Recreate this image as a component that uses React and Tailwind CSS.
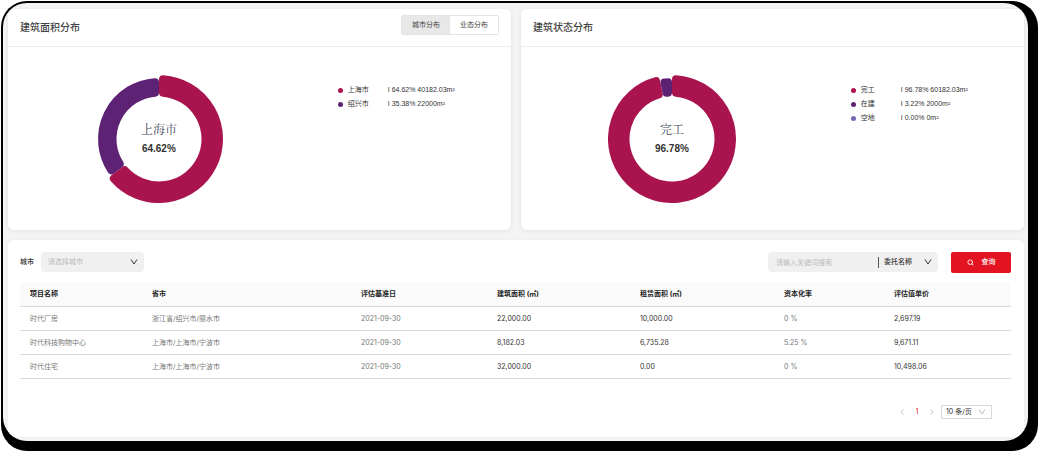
import React, { useState } from 'react';
import { ChevronLeft, ChevronRight, Search } from 'lucide-react';

const areaData = [
  { name: '上海市', percent: 64.62, value: '64.62% 40182.03m²', color: '#a9144f' },
  { name: '绍兴市', percent: 35.38, value: '35.38% 22000m²', color: '#5e2275' },
];

const statusData = [
  { name: '完工', percent: 96.78, value: '96.78% 60182.03m²', color: '#a9144f' },
  { name: '在建', percent: 3.22, value: '3.22% 2000m²', color: '#5e2275' },
  { name: '空地', percent: 0, value: '0.00% 0m²', color: '#7468b4' },
];

const rows = [
  ['时代厂房', '浙江省/绍兴市/丽水市', '2021-09-30', '22,000.00', '10,000.00', '0 %', '2,697.19'],
  ['时代科技购物中心', '上海市/上海市/宁波市', '2021-09-30', '8,182.03', '6,735.28', '5.25 %', '9,671.11'],
  ['时代住宅', '上海市/上海市/宁波市', '2021-09-30', '32,000.00', '0.00', '0 %', '10,498.06'],
];

const columns = [
  { title: '项目名称', width: 'w-[122px]' },
  { title: '省市', width: 'w-[209px]' },
  { title: '评估基准日', width: 'w-[136px]' },
  { title: '建筑面积 (㎡)', width: 'w-[143px]', strong: true },
  { title: '租赁面积 (㎡)', width: 'w-[144px]', strong: true },
  { title: '资本化率', width: 'w-[110px]' },
  { title: '评估值单价', width: 'w-[127px]', strong: true },
];

const CORNER = 4;

// Ring sector with rounded corners: a smaller sector with a round-joined stroke
const sectorPath = (start, end, inner, outer) => {
  const ro = outer - CORNER;
  const ri = inner + CORNER;
  const po = Math.asin(CORNER / ro);
  const pi = Math.asin(CORNER / ri);
  const at = (r, a) => `${r * Math.sin(a)} ${-r * Math.cos(a)}`;
  const large = end - start - 2 * po > Math.PI ? 1 : 0;
  return [
    `M ${at(ro, start + po)}`,
    `A ${ro} ${ro} 0 ${large} 1 ${at(ro, end - po)}`,
    `L ${at(ri, end - pi)}`,
    `A ${ri} ${ri} 0 ${large} 0 ${at(ri, start + pi)}`,
    'Z',
  ].join(' ');
};

const Donut = ({ data }) => {
  let angle = 0;
  const sectors = data
    .filter((item) => item.percent > 0)
    .map((item, index) => {
      const start = angle;
      angle += (item.percent / 100) * Math.PI * 2;
      // the selected sector stands out a little
      return { ...item, d: sectorPath(start, angle, 42.5, index === 0 ? 64 : 61) };
    });

  return (
    <div className="grid h-32 w-32 place-items-center">
      <svg viewBox="-64 -64 128 128" className="col-start-1 row-start-1 h-32 w-32" aria-hidden="true">
        {sectors.map((s) => (
          <path
            key={s.name}
            d={s.d}
            fill={s.color}
            stroke={s.color}
            strokeWidth={CORNER * 2}
            strokeLinejoin="round"
          />
        ))}
      </svg>
      <div className="col-start-1 row-start-1 text-center">
        <p className="font-['Noto_Serif_CJK_SC','Noto_Sans_CJK_SC',serif] text-[12px] leading-5 text-[#464b60]">
          {data[0].name}
        </p>
        <p className="font-['Liberation_Sans',sans-serif] text-[10px] font-bold leading-5 text-[#333]">
          {data[0].percent}%
        </p>
      </div>
    </div>
  );
};

const ChartCard = ({ title, data, children }) => (
  <section className="rounded-md bg-white shadow-[0_1px_4px_rgba(0,0,0,0.08)]">
    <header className="flex h-[38px] items-start justify-between border-b border-[#eee] px-3 pt-1.5">
      <h2 className="text-[10px] font-medium leading-6 text-[#444]">{title}</h2>
      {children}
    </header>
    <div className="flex pb-[27px] pt-7">
      <div className="flex w-3/5 justify-center">
        <Donut data={data} />
      </div>
      <ul className="pl-7 pt-2 font-['Liberation_Sans','Noto_Sans_CJK_SC',sans-serif] text-[7px] leading-[14px] text-[#333]">
        {data.map((item) => (
          <li key={item.name} className="flex items-center whitespace-nowrap">
            <span className="mr-[5px] h-[5px] w-[5px] rounded-full" style={{ background: item.color }} />
            <span className="w-10">{item.name}</span>
            <span>I {item.value}</span>
          </li>
        ))}
      </ul>
    </div>
  </section>
);

const Chevron = ({ className }) => (
  <svg
    viewBox="0 0 8 8"
    className={`pointer-events-none absolute h-2 w-2 ${className}`}
    fill="none"
    stroke="currentColor"
    aria-hidden="true"
  >
    <path d="M1 1.5 4 6 7 1.5" />
  </svg>
);

const App = () => {
  const [tab, setTab] = useState('城市分布');

  return (
    <div className="bg-white p-px font-['Inter','Noto_Sans_CJK_SC',sans-serif]">
      <div className="rounded-[26px] bg-black pb-[10px] pl-[2px] pr-[10px] pt-[2px]">
        <main className="overflow-hidden rounded-[24px] bg-[#f4f4f4] pb-1 pl-[5px] pr-1 pt-1.5">
          <div className="grid grid-cols-2 gap-[10px]">
            <ChartCard title="建筑面积分布" data={areaData}>
              <div className="flex h-5 overflow-hidden rounded-[2px] border border-[#e4e4e4] text-[7px] text-[#444]">
                {['城市分布', '业态分布'].map((name) => (
                  <button
                    key={name}
                    type="button"
                    onClick={() => setTab(name)}
                    className={`w-12 ${tab === name ? 'bg-[#e8e8e8]' : 'bg-white'}`}
                  >
                    {name}
                  </button>
                ))}
              </div>
            </ChartCard>
            <ChartCard title="建筑状态分布" data={statusData} />
          </div>

          <section className="mt-[10px] rounded-md bg-white pb-[18px] pt-3 shadow-[0_0_4px_rgba(0,0,0,0.04)]">
            <form
              className="flex h-5 items-center pl-3 pr-[13px] text-[7px] text-[#333]"
              onSubmit={(e) => e.preventDefault()}
            >
              <label htmlFor="city" className="mr-[7px] font-medium">
                城市
              </label>
              <div className="relative h-5">
                <select
                  id="city"
                  defaultValue=""
                  className="h-5 w-[103px] appearance-none rounded bg-[#f0f0f0] px-[7px] text-[#bbb]"
                >
                  <option value="">请选择城市</option>
                  <option>上海市</option>
                  <option>绍兴市</option>
                </select>
                <Chevron className="right-1.5 top-1.5" />
              </div>

              <div className="ml-auto flex h-5 w-[170px] items-center rounded bg-[#f0f0f0]">
                <input
                  type="text"
                  aria-label="关键词"
                  placeholder="请输入关键词搜索"
                  className="h-5 w-[110px] bg-transparent px-2 outline-none placeholder:text-[#bbb]"
                />
                <span className="h-[11px] w-px bg-[#555]" />
                <div className="relative h-5 flex-1">
                  <select
                    aria-label="搜索类型"
                    className="h-5 w-full appearance-none bg-transparent pl-[5px] font-medium"
                  >
                    <option>委托名称</option>
                    <option>项目名称</option>
                  </select>
                  <Chevron className="right-1.5 top-1.5" />
                </div>
              </div>

              <button
                type="submit"
                className="ml-[13px] flex h-[21px] w-[60px] items-center justify-center gap-2 rounded-[2px] bg-[#e31322] font-medium text-white"
              >
                <Search className="h-[7px] w-[7px]" strokeWidth={3} />
                查询
              </button>
            </form>

            <div className="mt-[10px] pl-3 pr-[13px]">
              <table className="w-full table-fixed border-separate border-spacing-0 text-left text-[7px] leading-[10px]">
                <thead>
                  <tr className="h-[25px] bg-[#fafafa] text-[#222]">
                    {columns.map((col) => (
                      <th
                        key={col.title}
                        scope="col"
                        className={`border-b border-[#d9d9d9] px-[10px] py-0 font-bold ${col.width}`}
                      >
                        {col.title}
                      </th>
                    ))}
                  </tr>
                </thead>
                <tbody>
                  {rows.map((row) => (
                    <tr key={row[0]} className="h-6">
                      {row.map((cell, i) => (
                        <td
                          key={columns[i].title}
                          className={`border-b border-[#d9d9d9] px-[10px] py-0 ${
                            columns[i].strong ? 'text-[#333]' : 'text-[#777]'
                          }`}
                        >
                          {cell}
                        </td>
                      ))}
                    </tr>
                  ))}
                </tbody>
              </table>
            </div>

            <nav
              aria-label="分页"
              className="mt-[26px] flex h-[14px] items-center justify-end pr-8 text-[7px] text-[#333]"
            >
              <button type="button" aria-label="上一页" className="text-[#bbb]">
                <ChevronLeft className="h-[10px] w-[10px]" strokeWidth={2} />
              </button>
              <button type="button" className="w-5 text-[#e31322]">
                1
              </button>
              <button type="button" aria-label="下一页" className="text-[#bbb]">
                <ChevronRight className="h-[10px] w-[10px]" strokeWidth={2} />
              </button>
              <div className="relative ml-1 h-[14px] text-[#bbb]">
                <select
                  aria-label="每页条数"
                  className="h-[14px] w-[51px] appearance-none border border-[#d9d9d9] bg-white pl-1 text-[#333]"
                >
                  <option>10 条/页</option>
                  <option>20 条/页</option>
                </select>
                <Chevron className="right-1.5 top-[3px]" />
              </div>
            </nav>
          </section>
        </main>
      </div>
    </div>
  );
};

export default App;
